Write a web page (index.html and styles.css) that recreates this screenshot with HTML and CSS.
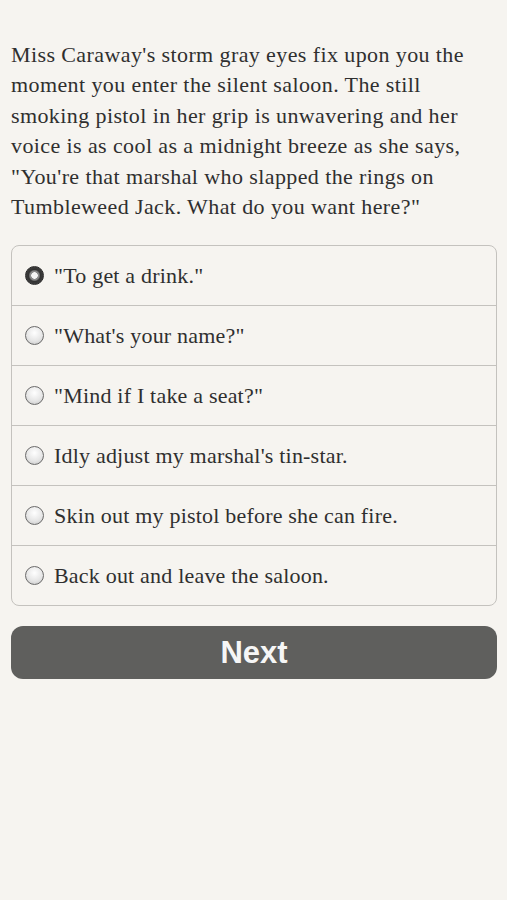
FILE: index.html
```html
<!DOCTYPE html>
<html lang="en">
<head>
	<meta charset="UTF-8">
	<title>Saloon</title>
	<link rel="stylesheet" href="styles.css">
</head>
<body>
	<section class="story">
		<p class="passage">Miss Caraway's storm gray eyes fix upon you the moment you enter the silent saloon. The still smoking pistol in her grip is unwavering and her voice is as cool as a midnight breeze as she says, "You're that marshal who slapped the rings on Tumbleweed Jack. What do you want here?"</p>
		<ul class="choices">
			<li class="checked"><span class="radio"></span>"To get a drink."</li>
			<li><span class="radio"></span>"What's your name?"</li>
			<li><span class="radio"></span>"Mind if I take a seat?"</li>
			<li><span class="radio"></span>Idly adjust my marshal's tin-star.</li>
			<li><span class="radio"></span>Skin out my pistol before she can fire.</li>
			<li><span class="radio"></span>Back out and leave the saloon.</li>
		</ul>
		<a href="javascript:;" class="next">Next</a>
	</section>
</body>
</html>
```
FILE: styles.css
```css
a{
	text-decoration: none;
}
html,body{
	background-color: #f6f4f0;
}
body{
	margin: 0;
	font-family: "Liberation Serif", "DejaVu Serif", serif;
	color: #2f2f2f;
}
	.story{
		padding: 40px 10px 0 11px;
	}
	.passage{
		margin: 0;
		font-size: 22px;
		letter-spacing: 0.4px;
		line-height: 30.4px;
	}
	.choices{
		list-style: none;
		margin: 23px 0 0;
		padding: 0;
		border: 1px solid #c4c2be;
		border-radius: 8px;
	}
	.choices li{
		display: flex;
		align-items: center;
		height: 59px;
		padding-left: 13px;
		font-size: 22px;
		letter-spacing: 0.2px;
		border-top: 1px solid #c4c2be;
	}
	.choices li:first-child{
		border-top: none;
	}
	.radio{
		width: 17px;
		height: 17px;
		border-radius: 50%;
		border: 1px solid #6a6a6a;
		background: radial-gradient(circle at 50% 35%, #ffffff 0%, #e4e4e4 60%, #bdbdbd 100%);
		margin-right: 10px;
		flex-shrink: 0;
	}
	.checked .radio{
		border-color: #2a2a2a;
		background: radial-gradient(circle, #f4f4f4 0 3px, #8a8a8a 3.5px 4.5px, #333 6px, #4a4a4a 100%);
	}
	.next{
		display: block;
		margin-top: 20px;
		height: 53px;
		border-radius: 12px;
		background-color: #5f5f5d;
		color: #f6f6f6;
		text-align: center;
		line-height: 53px;
		font-family: "Liberation Sans", Arial, sans-serif;
		font-weight: bold;
		font-size: 31px;
	}
```
